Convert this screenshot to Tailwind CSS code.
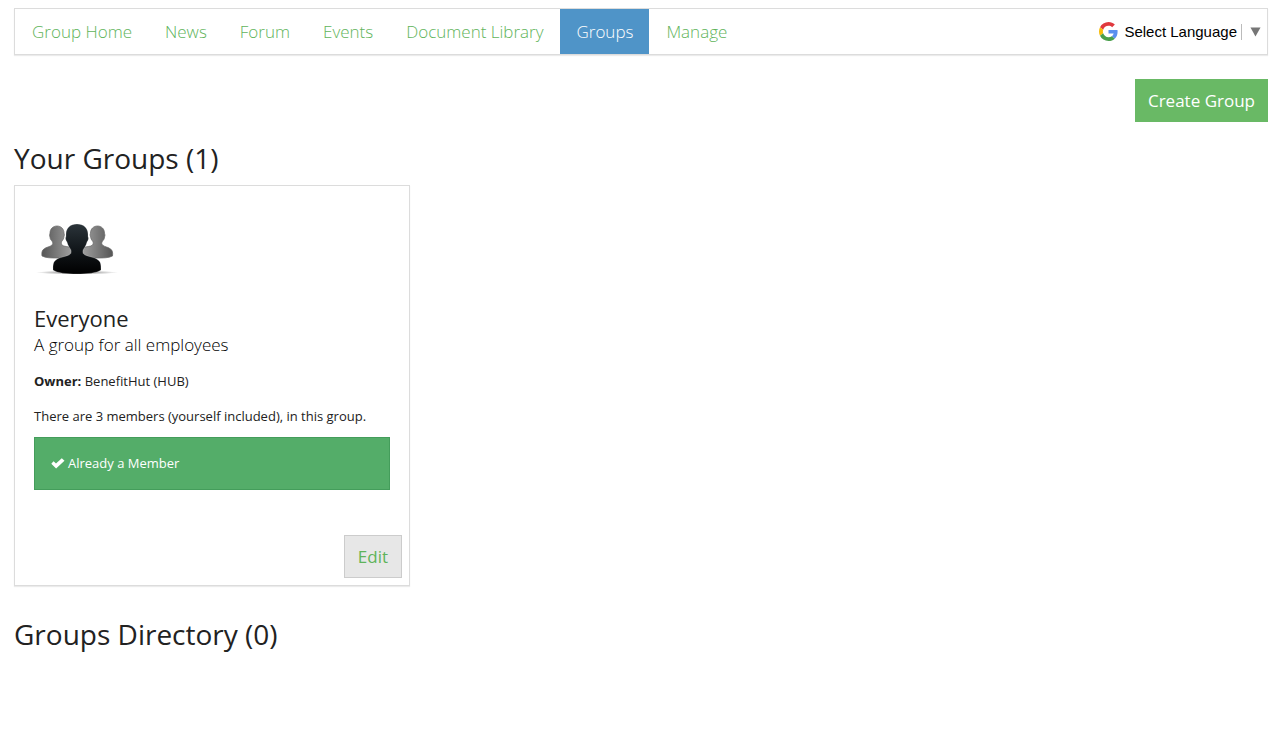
<!DOCTYPE html>
<html lang="en">
<head>
    <meta charset="UTF-8">
    <meta name="viewport" content="width=device-width, initial-scale=1.0">
    <title>Groups</title>
    <script src="https://cdn.jsdelivr.net/npm/@tailwindcss/browser@4"></script>
</head>
<body class="bg-white pl-[14px] pr-[17px] pt-2 font-['Open_Sans',sans-serif] text-[13px] text-[#222]">
    <!-- Main navigation -->
    <header class="flex items-center justify-between border border-[#dcdcdc] shadow-[0_1px_1px_rgba(0,0,0,0.08)]">
        <nav class="flex gap-px pl-px text-[17px] leading-[45px] font-light text-[#5fb45b]">
            <a href="#" class="px-4">Group Home</a>
            <a href="#" class="px-4">News</a>
            <a href="#" class="px-4">Forum</a>
            <a href="#" class="px-4">Events</a>
            <a href="#" class="px-4">Document Library</a>
            <a href="#" class="bg-[#4f94c8] px-4 text-white" aria-current="page">Groups</a>
            <a href="#" class="px-4">Manage</a>
        </nav>
        <a href="#" class="flex items-center pr-[6px] font-['Liberation_Sans',Arial,sans-serif] text-[15px] leading-4 text-black">
            <svg class="mr-[6px] size-[19px]" viewBox="0 0 48 48" aria-hidden="true">
                <path fill="#e0393e" d="M24 9.5c3.54 0 6.71 1.22 9.21 3.6l6.85-6.85C35.9 2.38 30.47 0 24 0 14.62 0 6.51 5.38 2.56 13.22l7.98 6.19C12.43 13.72 17.74 9.5 24 9.5z"/>
                <path fill="#5a8fee" d="M46.98 24.55c0-1.57-.15-3.09-.38-4.55H24v9.02h12.94c-.58 2.96-2.26 5.48-4.78 7.18l7.73 6c4.51-4.18 7.09-10.36 7.09-17.65z"/>
                <path fill="#f7bc0a" d="M10.53 28.59c-.48-1.45-.76-2.99-.76-4.59s.27-3.14.76-4.59l-7.98-6.19C.92 16.46 0 20.12 0 24c0 3.88.92 7.54 2.56 10.78l7.97-6.19z"/>
                <path fill="#4a9f4c" d="M24 48c6.48 0 11.93-2.13 15.89-5.81l-7.73-6c-2.15 1.45-4.92 2.3-8.16 2.3-6.26 0-11.57-4.22-13.47-9.91l-7.98 6.19C6.51 42.62 14.62 48 24 48z"/>
            </svg>
            <span class="border-r border-[#bbb] pr-1">Select Language</span>
            <svg class="ml-2 h-[10px] w-[11px]" viewBox="0 0 12 10" aria-hidden="true">
                <path fill="#767676" d="M0.5 0h11L6 10z"/>
            </svg>
        </a>
    </header>

    <main>
        <div class="mt-6 flex justify-end">
            <button type="button" class="h-[43px] bg-[#69b965] px-[13px] text-[17px] text-white">Create Group</button>
        </div>

        <section>
            <h2 class="mt-4 mb-[7px] text-[28px] leading-10">Your Groups (1)</h2>
            <div class="grid grid-cols-3 gap-[33px]">
                <article class="border border-[#dcdcdc] px-[19px] pt-[19px] pb-[7px] shadow-[0_1px_1px_rgba(0,0,0,0.08)]">
                    <svg class="h-[85px] w-[85px]" viewBox="0 0 85 85" role="img" aria-label="Group">
                        <defs>
                            <linearGradient id="side-left" x1="0" y1="0" x2="1" y2="0">
                                <stop offset="0" stop-color="#555"/>
                                <stop offset="1" stop-color="#a0a0a0"/>
                            </linearGradient>
                            <linearGradient id="side-right" x1="0" y1="0" x2="1" y2="0">
                                <stop offset="0" stop-color="#a0a0a0"/>
                                <stop offset="1" stop-color="#555"/>
                            </linearGradient>
                            <linearGradient id="front" x1="0" y1="0" x2="0" y2="1">
                                <stop offset="0" stop-color="#2b343a"/>
                                <stop offset="0.5" stop-color="#12171b"/>
                                <stop offset="1" stop-color="#000"/>
                            </linearGradient>
                            <radialGradient id="ground">
                                <stop offset="0" stop-color="#333" stop-opacity="0.7"/>
                                <stop offset="1" stop-color="#333" stop-opacity="0"/>
                            </radialGradient>
                        </defs>
                        <ellipse cx="43" cy="67.500" rx="41" ry="2" fill="url(#ground)"/>
                        <path fill="url(#side-left)" stroke="#666" stroke-width="0.700" d="M23 21c-4 0-7 3-7 7 0 1-1 2 0 4 0 2 1 3 2 4 1 2 1 3 0 4-2 2-6 2-8 4-2 1-2.500 4-2 7 4 2 9 2 15 2s12 0 15-2V43c-4-2-8-1-10-3-1-1-1-3 0-4 1-1 2-3 2-5 1-1 0-2 0-3 0-4-3-7-7-7z"/>
                        <path fill="url(#side-right)" stroke="#666" stroke-width="0.700" d="M63.500 21c4 0 7 3 7 7 0 1 1 2 0 4 0 2-1 3-2 4-1 2-1 3 0 4 2 2 6 2 8 4 2 1 2.500 4 2 7-4 2-9 2-15 2s-12 0-15-2V43c4-2 8-1 10-3 1-1 1-3 0-4-1-1-2-3-2-5-1-1 0-2 0-3 0-4 3-7 7-7z"/>
                        <path fill="url(#front)" stroke="#fff" stroke-opacity="0.300" stroke-width="0.600" d="M43 19c-6.500 0-11 4-11 10 0 2 0 3-.5 4 0 2 1 3 1.500 4 1 4 3 6 4 8 .5 3 0 4-2 5-4 2-10 2-13 5-3 2-3 5-3 10 4 3 14 4 24 4s20-1 24-4c0-5 0-8-3-10-3-3-9-3-13-5-2-1-2.500-2-2-5 1-2 3-4 4-8 .5-1 1.500-2 1.500-4-.5-1-.5-2-.5-4 0-6-4.500-10-11-10z"/>
                    </svg>
                    <h3 class="mt-[14px] text-[22px] leading-[28px]">Everyone</h3>
                    <p class="mt-px text-[17px] leading-6 font-light text-black">A group for all employees</p>
                    <p class="mt-[14px] leading-5"><strong class="font-bold">Owner:</strong> BenefitHut (HUB)</p>
                    <p class="mt-[15px] leading-5">There are 3 members (yourself included), in this group.</p>
                    <div class="mt-[11px] flex h-[53px] items-center gap-[3px] border border-[#449d5b] bg-[#54ad69] px-4 text-white">
                        <svg class="h-[11px] w-[14px]" viewBox="0 0 14 11" aria-hidden="true">
                            <path fill="#fff" d="M0.300 5.700L2.600 3.300 5 5.600 10.800 0.200 13.500 2.700 5.100 10.600z"/>
                        </svg>
                        Already a Member
                    </div>
                    <div class="-mr-3 mt-[45px] flex justify-end">
                        <button type="button" class="h-[43px] border border-[#ccc] bg-[#e7e7e7] px-[13px] text-[17px] text-[#5fb45b]">Edit</button>
                    </div>
                </article>
            </div>
        </section>

        <section>
            <h2 class="mt-7 text-[28px] leading-10">Groups Directory (0)</h2>
        </section>
    </main>
</body>
</html>
